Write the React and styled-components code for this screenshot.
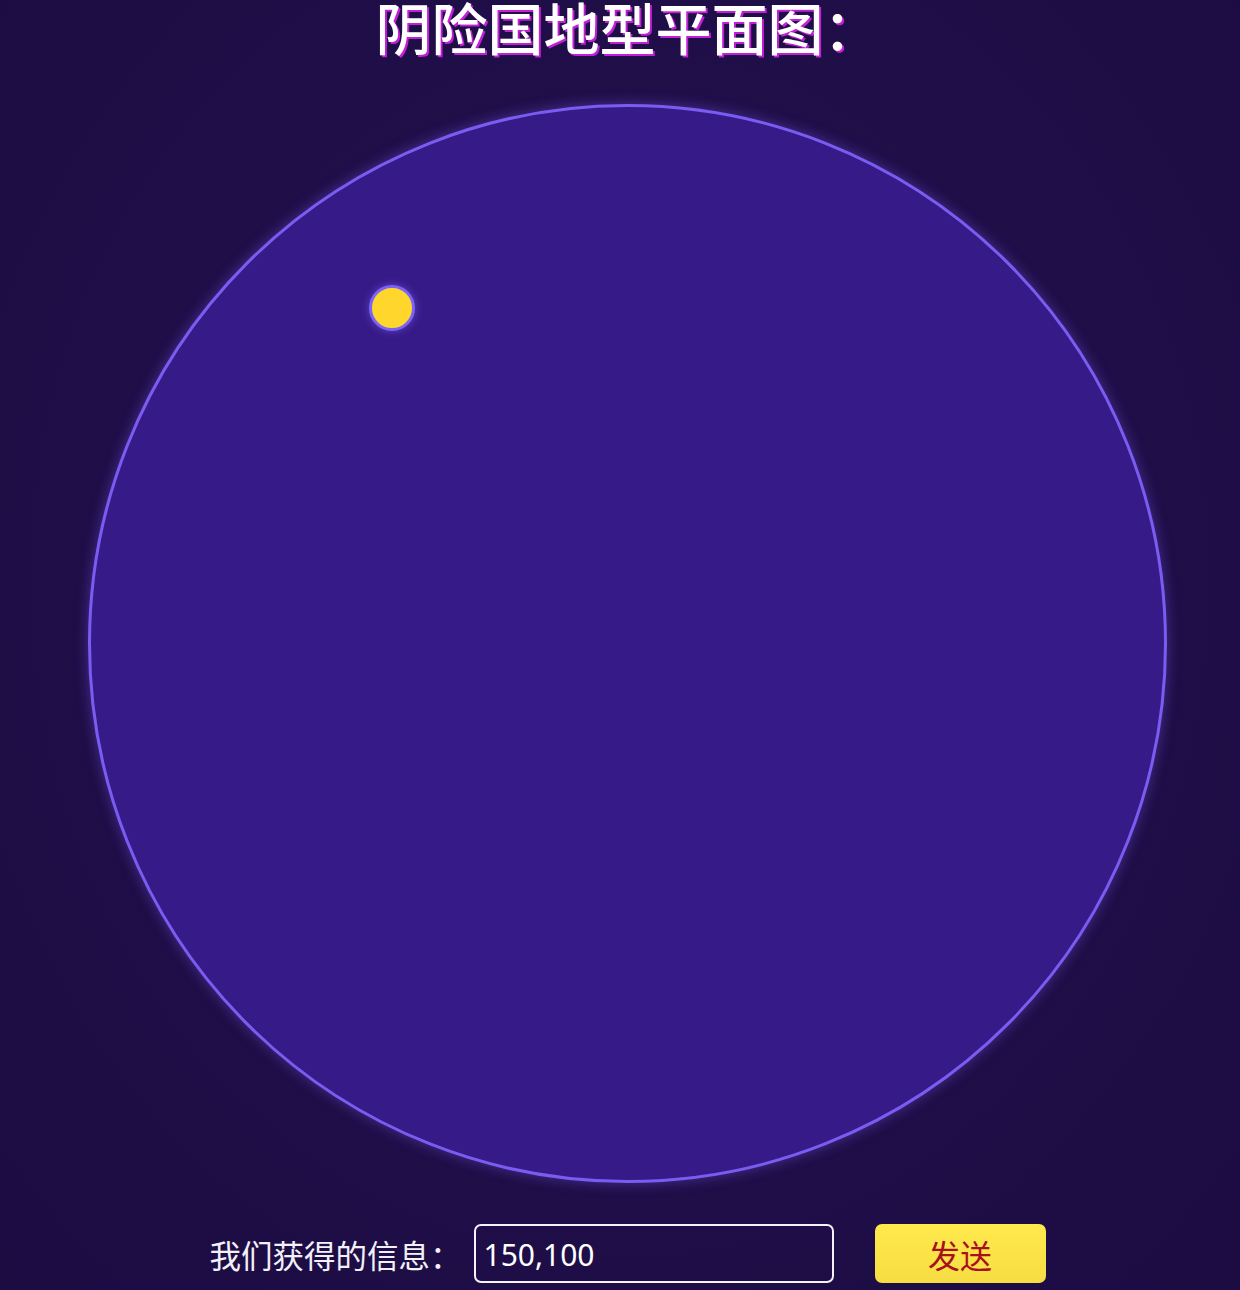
import React, { useState } from 'react';
import styled, { createGlobalStyle } from 'styled-components';

const GlobalStyle = createGlobalStyle`
  html, body {
    margin: 0;
    padding: 0;
    background: #1e0d46;
  }
  body {
    font-family: "Noto Sans CJK SC", "Noto Sans", sans-serif;
  }
`;

const Page = styled.main`
  min-height: 1290px;
  box-sizing: border-box;
  padding-left: 15px;
  display: flex;
  flex-direction: column;
  align-items: center;
  background: radial-gradient(ellipse at 50% 45%, #25104f 0%, #1f0e48 55%, #1c0c42 100%);
`;

const Title = styled.h1`
  margin: 0 0 8px;
  line-height: 52px;
  font-size: 56px;
  font-weight: 500;
  color: #ffffff;
  text-shadow: 2px 2px 0 #c21fd6;
`;

const Board = styled.div`
  position: relative;
  margin-top: 44px;
  width: 1079px;
  height: 1079px;
  box-sizing: border-box;
  border-radius: 50%;
  background: #361a87;
  border: 3px solid #7a5cf2;
  box-shadow: 0 0 14px rgba(122, 92, 242, 0.45);
`;

const Marker = styled.div`
  position: absolute;
  width: 46px;
  height: 46px;
  box-sizing: border-box;
  border-radius: 50%;
  background: #ffd62b;
  border: 3px solid #7c62f5;
  box-shadow: 0 0 8px rgba(124, 98, 245, 0.6);
  transform: translate(-50%, -50%);
`;

const Form = styled.form`
  margin-top: 41px;
  display: flex;
  align-items: center;
`;

const Label = styled.label`
  font-size: 31.5px;
  color: #f2f0f8;
  width: 264px;
  white-space: nowrap;
`;

const Input = styled.input`
  width: 360px;
  height: 59px;
  box-sizing: border-box;
  border: 2px solid #f4f2fa;
  border-radius: 7px;
  background: transparent;
  color: #ffffff;
  font-family: "Noto Sans", sans-serif;
  font-size: 30px;
  padding: 2px 8px 0;
  outline: none;
  caret-color: #ffffff;
`;

const SendButton = styled.button`
  margin-left: 41px;
  width: 171px;
  height: 59px;
  border: none;
  border-radius: 7px;
  background: linear-gradient(180deg, #ffe94d 0%, #f6de42 100%);
  color: #a8101e;
  font-family: "Noto Sans CJK SC", sans-serif;
  font-size: 32px;
  cursor: pointer;
`;

export default function App() {
  const [value, setValue] = useState('150,100');
  const [pos, setPos] = useState({ x: 301, y: 201 });

  const send = e => {
    e.preventDefault();
    const [x, y] = value.split(',').map(Number);
    if (!isNaN(x) && !isNaN(y)) setPos({ x: x + 151, y: y + 101 });
  };

  return (
    <>
      <GlobalStyle />
      <Page>
        <Title>阴险国地型平面图：</Title>
        <Board>
          <Marker style={{ left: pos.x, top: pos.y }} />
        </Board>
        <Form onSubmit={send}>
          <Label htmlFor="info">我们获得的信息：</Label>
          <Input id="info" autoFocus value={value} onChange={e => setValue(e.target.value)} />
          <SendButton type="submit">发送</SendButton>
        </Form>
      </Page>
    </>
  );
}
